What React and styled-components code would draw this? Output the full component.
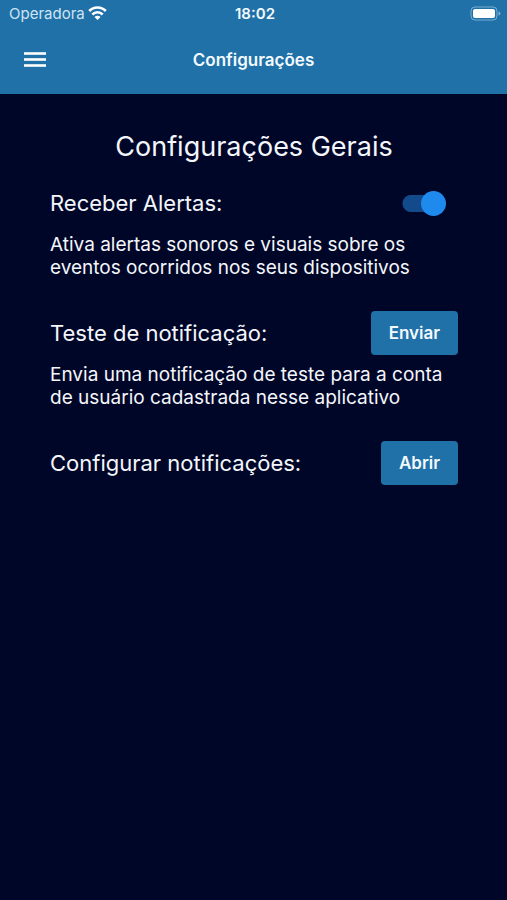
import React, { useState } from "react";
import styled, { createGlobalStyle } from "styled-components";

const GlobalStyle = createGlobalStyle`
  body {
    margin: 0;
    background: #000628;
    color: #f4f6fb;
    font-family: Inter, "Liberation Sans", sans-serif;
  }
`;

const Page = styled.div`
  min-height: 100vh;
  background: #000628;
`;

const Header = styled.header`
  background: #1f71a8;
  color: #f4f9fd;
`;

const StatusBar = styled.div`
  display: grid;
  grid-template-columns: 1fr auto 1fr;
  align-items: center;
  height: 26px;
  padding: 0 6px 0 9px;
  font-size: 15px;
`;

const Carrier = styled.div`
  display: flex;
  align-items: center;
  gap: 3px;
  color: #cfe4f4;
`;

const Clock = styled.div`
  font-weight: 600;
`;

const BatteryWrap = styled.div`
  display: flex;
  justify-content: flex-end;
`;

const NavBar = styled.div`
  display: grid;
  grid-template-columns: 1fr auto 1fr;
  align-items: center;
  height: 68px;
  padding: 0 20px;
`;

const MenuButton = styled.button`
  display: flex;
  justify-self: start;
  padding: 4px;
  border: 0;
  background: none;
  color: inherit;
  cursor: pointer;
`;

const NavTitle = styled.h1`
  margin: 0;
  font-size: 17px;
  font-weight: 600;
`;

const Content = styled.main`
  padding: 36px 49px 36px 50px;
`;

const Heading = styled.h2`
  margin: 0 0 17px;
  font-size: 27px;
  font-weight: 400;
  line-height: 34px;
  text-align: center;
`;

const Setting = styled.section`
  margin-bottom: 32px;
`;

const Row = styled.div`
  display: flex;
  align-items: center;
  justify-content: space-between;
  min-height: 44px;
`;

const Label = styled.label`
  font-size: 22px;
  line-height: 28px;
`;

const Description = styled.p`
  margin: 8px 0 0;
  font-size: 19px;
  line-height: 23px;
`;

const Button = styled.button`
  height: 44px;
  padding: 0 18px;
  border: 0;
  border-radius: 4px;
  background: #1f71a8;
  color: #f4f9fd;
  font-family: inherit;
  font-size: 17px;
  font-weight: 600;
  cursor: pointer;
`;

const Switch = styled.input`
  appearance: none;
  display: flex;
  align-items: center;
  justify-content: ${(props) => (props.checked ? "flex-end" : "flex-start")};
  width: 44px;
  height: 25px;
  margin: 0 12px 0 0;
  border-radius: 12px;
  background: linear-gradient(#124a8c, #124a8c) center / 26px 17px no-repeat,
    radial-gradient(circle at 9px 50%, #124a8c 8px, transparent 9px);
  cursor: pointer;

  &::before {
    content: "";
    width: 25px;
    height: 25px;
    border-radius: 50%;
    background: #1f8aee;
  }
`;

const WifiIcon = () => (
  <svg width="19" height="14" viewBox="0 0 19 14" fill="none" stroke="#fff" strokeWidth="2.6">
    <path d="M1.2 5a11.6 11.6 0 0 1 16.6 0" />
    <path d="M4.3 8.5a7.3 7.3 0 0 1 10.4 0" />
    <path d="M9.5 14 6.5 11a4.2 4.2 0 0 1 6 0z" fill="#fff" stroke="none" />
  </svg>
);

const BatteryIcon = () => (
  <svg width="31" height="15" viewBox="0 0 31 15">
    <rect x="1" y="1" width="26" height="13" rx="4" fill="none" stroke="#78aed2" />
    <rect x="3" y="3" width="22" height="9" rx="2" fill="#fff" />
    <path d="M28.5 5.2q2 .8 2 2.3t-2 2.3z" fill="#78aed2" />
  </svg>
);

const MenuIcon = () => (
  <svg width="22" height="16" viewBox="0 0 22 16" fill="#fff">
    <rect y="0.2" width="22" height="2.6" />
    <rect y="6.2" width="22" height="2.6" />
    <rect y="12.2" width="22" height="2.6" />
  </svg>
);

const App = () => {
  const [alerts, setAlerts] = useState(true);

  return (
    <Page>
      <GlobalStyle />
      <Header>
        <StatusBar>
          <Carrier>
            Operadora
            <WifiIcon />
          </Carrier>
          <Clock>18:02</Clock>
          <BatteryWrap>
            <BatteryIcon />
          </BatteryWrap>
        </StatusBar>
        <NavBar>
          <MenuButton type="button" aria-label="Menu">
            <MenuIcon />
          </MenuButton>
          <NavTitle>Configurações</NavTitle>
        </NavBar>
      </Header>
      <Content>
        <Heading>Configurações Gerais</Heading>
        <Setting>
          <Row>
            <Label htmlFor="alerts">Receber Alertas:</Label>
            <Switch
              id="alerts"
              type="checkbox"
              role="switch"
              checked={alerts}
              onChange={(e) => setAlerts(e.target.checked)}
            />
          </Row>
          <Description>
            Ativa alertas sonoros e visuais sobre os eventos ocorridos nos seus dispositivos
          </Description>
        </Setting>
        <Setting>
          <Row>
            <Label htmlFor="send">Teste de notificação:</Label>
            <Button id="send" type="button">Enviar</Button>
          </Row>
          <Description>
            Envia uma notificação de teste para a conta de usuário cadastrada nesse aplicativo
          </Description>
        </Setting>
        <Setting>
          <Row>
            <Label htmlFor="open">Configurar notificações:</Label>
            <Button id="open" type="button">Abrir</Button>
          </Row>
        </Setting>
      </Content>
    </Page>
  );
};

export default App;
